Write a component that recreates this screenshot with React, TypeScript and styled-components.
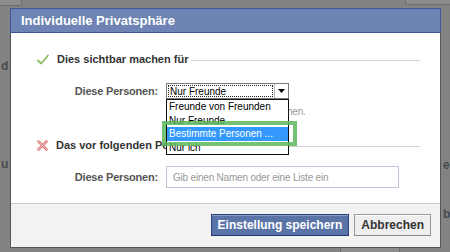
import React from "react";
import styled, { createGlobalStyle } from "styled-components";

const GlobalStyle = createGlobalStyle`
  html, body {
    margin: 0;
    padding: 0;
  }
  body {
    font-family: "Liberation Sans", Arial, sans-serif;
    font-size: 11px;
    color: #333;
  }
`;

const Backdrop = styled.div`
  position: relative;
  width: 450px;
  height: 252px;
  overflow: hidden;
  background: #838383;
  padding: 8px 0 0 10px;
  box-sizing: border-box;
`;

const PageBit = styled.div<{ $x: number; $y: number }>`
  position: absolute;
  left: ${(p) => p.$x}px;
  top: ${(p) => p.$y}px;
  font-size: 12px;
  font-weight: bold;
  color: #4a4a4a;
`;

const PageBox = styled.div<{ $x: number; $y: number; $w: number; $h: number }>`
  position: absolute;
  left: ${(p) => p.$x}px;
  top: ${(p) => p.$y}px;
  width: ${(p) => p.$w}px;
  height: ${(p) => p.$h}px;
  border: 1px solid #6e6e6e;
  background: #8c8c8c;
  box-sizing: border-box;
`;

const Dialog = styled.div`
  position: relative;
  width: 431px;
  height: 240px;
  background: #fff;
  border: 1px solid #555;
  border-top: none;
  box-sizing: border-box;
  display: flex;
  flex-direction: column;
`;

const Header = styled.div`
  height: 25px;
  background: #6d84b4;
  border: 1px solid #3b5998;
  margin: 0 -1px;
  box-sizing: border-box;
  color: #fff;
  font-size: 13px;
  font-weight: bold;
  display: flex;
  align-items: center;
  padding-left: 10px;
`;

const Body = styled.div`
  flex: 1;
  padding: 17px 20px 0 26px;
  display: flex;
  flex-direction: column;
`;

const SectionHead = styled.div<{ $top?: number }>`
  display: flex;
  align-items: center;
  gap: 8px;
  height: 18px;
  margin-top: ${(p) => p.$top ?? 0}px;
  font-weight: bold;
  font-size: 11px;
  color: #333;
`;

const Rule = styled.div`
  flex: 1;
  height: 1px;
  background: #d0d0d0;
  margin-left: -5px;
  margin-top: 3px;
`;

const Row = styled.div<{ $top: number }>`
  display: flex;
  align-items: center;
  margin-top: ${(p) => p.$top}px;
`;

const Label = styled.div`
  width: 129px;
  text-align: right;
  font-weight: bold;
  color: #555;
  padding-right: 8px;
  box-sizing: border-box;
  letter-spacing: -0.2px;
`;

const SelectWrap = styled.div`
  position: relative;
`;

const Select = styled.div`
  width: 123px;
  height: 16px;
  border: 1px solid #7a7a7a;
  box-sizing: border-box;
  display: flex;
  align-items: stretch;
  background: #fff;
`;

const SelectValue = styled.div`
  flex: 1;
  margin: 1px;
  border: 1px dotted #222;
  display: flex;
  align-items: center;
  padding-left: 1px;
  font-size: 10px;
  color: #000;
`;

const ArrowBox = styled.div`
  width: 13px;
  border-left: 1px solid #b8b8b8;
  display: flex;
  align-items: center;
  justify-content: center;
  background: #fff;
`;

const Menu = styled.div`
  position: absolute;
  left: 0;
  top: 16px;
  width: 123px;
  border: 1px solid #111;
  box-sizing: border-box;
  background: #fff;
  z-index: 2;
`;

const MenuItem = styled.div<{ $active?: boolean }>`
  height: 13.5px;
  line-height: 13.5px;
  padding-left: 2px;
  font-size: 10px;
  white-space: nowrap;
  color: ${(p) => (p.$active ? "#fff" : "#000")};
  background: ${(p) => (p.$active ? "#3399ff" : "#fff")};
`;

const Marker = styled.div`
  position: absolute;
  left: -4px;
  top: 38px;
  width: 135px;
  height: 25px;
  border: 4px solid rgba(92, 184, 92, 0.85);
  box-sizing: border-box;
  z-index: 3;
  pointer-events: none;
`;

const Hint = styled.div`
  margin: 6px 0 0 131px;
  color: #999;
  font-size: 10px;
  letter-spacing: -0.2px;
  height: 14px;
  line-height: 14px;
`;

const Input = styled.div`
  width: 233px;
  height: 22px;
  border: 1px solid #bdc7d8;
  box-sizing: border-box;
  display: flex;
  align-items: center;
  padding-left: 6px;
  color: #999;
  font-size: 10px;
  letter-spacing: -0.2px;
`;

const Footer = styled.div`
  height: 44px;
  background: #f2f2f2;
  border-top: 1px solid #ccc;
  box-sizing: border-box;
  display: flex;
  align-items: center;
  justify-content: flex-end;
  gap: 5px;
  padding: 0 9px 2px 0;
`;

const Button = styled.button<{ $primary?: boolean }>`
  height: 22px;
  padding: 0 6px;
  font-family: "Liberation Sans", Arial, sans-serif;
  font-size: 12px;
  font-weight: bold;
  border: 1px solid ${(p) => (p.$primary ? "#29447e" : "#999")};
  border-bottom-color: ${(p) => (p.$primary ? "#1a356e" : "#888")};
  background: ${(p) => (p.$primary ? "#5b74a8" : "#eee")};
  color: ${(p) => (p.$primary ? "#fff" : "#333")};
  box-shadow: inset 0 1px 0 ${(p) => (p.$primary ? "#8a9cc2" : "#fff")};
`;

const CheckIcon = () => (
  <svg width="12" height="11" viewBox="0 0 12 11">
    <path d="M1 6.5 L4.2 9.5 L11 1.5" fill="none" stroke="#8cc063" strokeWidth="1.8" strokeLinecap="round" strokeLinejoin="round" />
  </svg>
);

const CrossIcon = () => (
  <svg width="11" height="11" viewBox="0 0 11 11">
    <path d="M1.5 1.5 L9.5 9.5 M9.5 1.5 L1.5 9.5" fill="none" stroke="#e08080" strokeWidth="2.6" strokeLinecap="round" />
    <path d="M1.5 1.5 L9.5 9.5 M9.5 1.5 L1.5 9.5" fill="none" stroke="#f8d6d6" strokeWidth="0.8" strokeLinecap="round" />
  </svg>
);

const DownArrow = () => (
  <svg width="7" height="4" viewBox="0 0 7 4">
    <path d="M0 0 H7 L3.5 4 Z" fill="#000" />
  </svg>
);

const options = ["Freunde von Freunden", "Nur Freunde", "Bestimmte Personen ...", "Nur ich"];

export default function App() {
  return (
    <>
      <GlobalStyle />
      <Backdrop>
        <PageBox $x={-2} $y={-2} $w={24} $h={8} />
        <PageBox $x={405} $y={-2} $w={48} $h={7} />
        <PageBit $x={1} $y={59}>d</PageBit>
        <PageBit $x={1} $y={157}>u</PageBit>
        <PageBit $x={443} $y={158}>eu</PageBit>
        <PageBit $x={443} $y={207}>be</PageBit>
        <PageBox $x={340} $y={246} $w={60} $h={10} />
        <Dialog>
          <Header>Individuelle Privatsphäre</Header>
          <Body>
            <SectionHead>
              <CheckIcon />
              Dies sichtbar machen für
              <Rule />
            </SectionHead>
            <Row $top={15}>
              <Label>Diese Personen:</Label>
              <SelectWrap>
                <Select>
                  <SelectValue>Nur Freunde</SelectValue>
                  <ArrowBox>
                    <DownArrow />
                  </ArrowBox>
                </Select>
                <Menu>
                  {options.map((o, i) => (
                    <MenuItem key={o} $active={i === 2}>
                      {o}
                    </MenuItem>
                  ))}
                </Menu>
                <Marker />
              </SelectWrap>
            </Row>
            <Hint>Nur Freunde können das sehen.</Hint>
            <SectionHead $top={17}>
              <CrossIcon />
              Das vor folgenden Personen verbergen
              <Rule />
            </SectionHead>
            <Row $top={12}>
              <Label>Diese Personen:</Label>
              <Input>Gib einen Namen oder eine Liste ein</Input>
            </Row>
          </Body>
          <Footer>
            <Button $primary>Einstellung speichern</Button>
            <Button>Abbrechen</Button>
          </Footer>
        </Dialog>
      </Backdrop>
    </>
  );
}
